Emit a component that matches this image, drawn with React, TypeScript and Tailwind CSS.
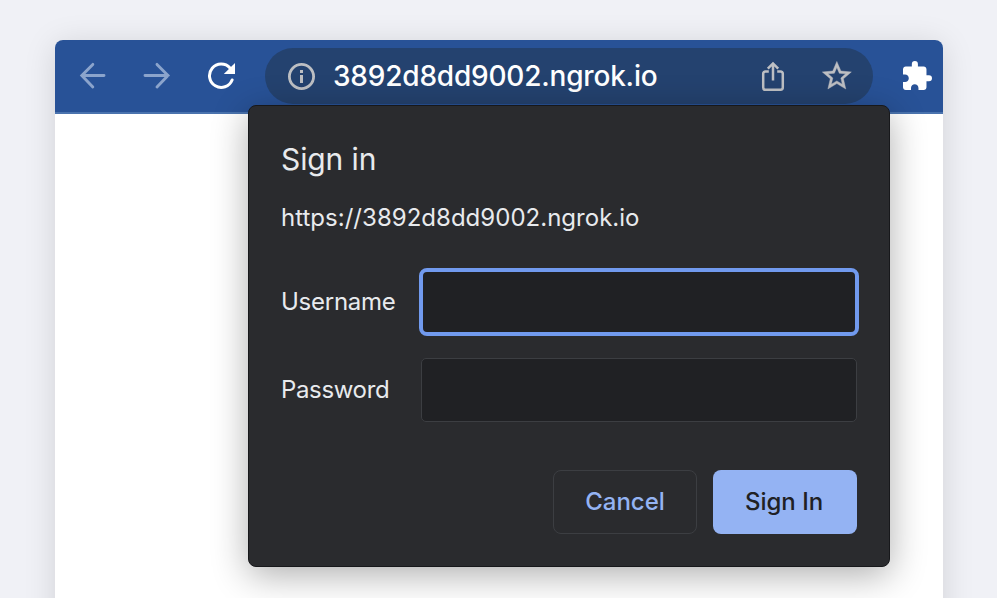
import React from "react";

function BackIcon() {
  return (
    <svg width="28" height="28" viewBox="0 0 28 28" fill="none" stroke="#8ba4cc" strokeWidth="2.9" strokeLinecap="round" strokeLinejoin="miter">
      <path d="M25 13.5H3M13.8 2.4 2.8 13.5 13.8 25" />
    </svg>
  );
}

function ForwardIcon() {
  return (
    <svg width="28" height="28" viewBox="0 0 28 28" fill="none" stroke="#8ba4cc" strokeWidth="2.9" strokeLinecap="round" strokeLinejoin="miter">
      <path d="M2 13.5H25M14 2.4 25 13.5 14 25" />
    </svg>
  );
}

function ReloadIcon() {
  return (
    <svg width="28" height="28" viewBox="0 0 28 28" fill="none">
      <path d="M25.1 18A11.7 11.7 0 1 1 23 6" stroke="#fff" strokeWidth="3" strokeLinecap="round" />
      <path d="M28 1v11H16.8z" fill="#fff" />
    </svg>
  );
}

function InfoIcon() {
  return (
    <svg width="28" height="28" viewBox="0 0 28 28" fill="none">
      <circle cx="13.5" cy="14.5" r="12.1" stroke="#bdbfc3" strokeWidth="2.8" />
      <path d="M12 8h3v3h-3zM12 13h3v8h-3z" fill="#bdbfc3" />
    </svg>
  );
}

function ShareIcon() {
  return (
    <svg width="24" height="32" viewBox="0 0 24 32" fill="none" stroke="#bdbfc3" strokeWidth="2.5">
      <path d="M7.8 11.6H4.4a2.2 2.2 0 0 0-2.2 2.2v13.8a2.2 2.2 0 0 0 2.2 2.2h15.2a2.2 2.2 0 0 0 2.2-2.2V13.8a2.2 2.2 0 0 0-2.2-2.2h-3.4" />
      <path d="M12 20.5V4M6.8 8.6 12 3.4l5.2 5.2" />
    </svg>
  );
}

function StarIcon() {
  return (
    <svg width="34.8" height="34.8" viewBox="-0.3 0.3 24 24" fill="#bdbfc3" stroke="#bdbfc3" strokeWidth="0.3">
      <path d="M22 9.24l-7.19-.62L12 2 9.19 8.63 2 9.24l5.46 4.73L5.82 21 12 17.27 18.18 21l-1.63-7.03L22 9.24zM12 15.4l-3.76 2.27 1-4.28-3.32-2.88 4.38-.38L12 6.1l1.71 4.04 4.38.38-3.32 2.88 1 4.28L12 15.4z" />
    </svg>
  );
}

function ExtensionIcon() {
  return (
    <svg width="29" height="29" viewBox="2 1 21 21" fill="#fff">
      <path d="M20.8 11.3H19V7c0-1.1-.9-2-2-2h-4.2V3.2a2.2 2.2 0 0 0-4.4 0V5H4c-1.1 0-1.99.9-1.99 2v3.8H3.5c1.49 0 2.7 1.21 2.7 2.7s-1.21 2.7-2.7 2.7H2V20c0 1.1.9 2 2 2h3.8v-1.5c0-1.49 1.21-2.7 2.7-2.7 1.49 0 2.7 1.21 2.7 2.7V22H17c1.1 0 2-.9 2-2v-4.3h1.8a2.2 2.2 0 0 0 0-4.4z" />
    </svg>
  );
}

function Toolbar() {
  return (
    <header className="flex h-[74px] items-start overflow-hidden rounded-t-lg border-b-2 border-[#4a73ae] bg-[#285297] pt-2">
      <div className="flex h-14 w-[210px] items-center gap-9 pl-6">
        <BackIcon />
        <ForwardIcon />
        <ReloadIcon />
      </div>
      <div className="flex h-14 w-[608px] items-center rounded-full bg-[#24426f] pl-[23px] pr-[19px]">
        <InfoIcon />
        <span className="ml-[17px] flex-1 whitespace-nowrap text-[28px] font-[450] leading-none tracking-[-0.2px] text-white">
          3892d8dd9002.ngrok.io
        </span>
        <ShareIcon />
        <span className="ml-[34px] flex">
          <StarIcon />
        </span>
      </div>
      <div className="ml-[30px] flex h-[54px] items-center">
        <ExtensionIcon />
      </div>
    </header>
  );
}

function SignInDialog() {
  return (
    <form
      onSubmit={(e) => e.preventDefault()}
      className="absolute left-[248px] top-[105px] h-[462px] w-[642px] rounded-lg border border-[#17181b] bg-[#2a2b2e] px-8 text-[#e8eaed] shadow-[0_8px_36px_rgba(0,0,0,0.32)]"
    >
      <h1 className="mt-[35px] h-9 text-[30px] leading-9">
        <span className="tracking-[-0.1px]">Sign in</span>
      </h1>
      <p className="mt-[26px] h-[30px] whitespace-nowrap text-[24px] leading-[30px]">
        <span className="tracking-[0.02px]">https://3892d8dd9002.ngrok.io</span>
      </p>
      <div className="mt-[35px] flex h-[68px] items-center">
        <label htmlFor="user" className="w-[138px] text-[24px] tracking-[-0.25px]">Username</label>
        <input id="user" className="-mr-0.5 h-[68px] w-[440px] rounded-lg border-4 border-[#719aee] bg-[#202124] outline-none" />
      </div>
      <div className="mt-[22px] flex h-16 items-center">
        <label htmlFor="pass" className="w-[140px] text-[24px] tracking-[-0.35px]">Password</label>
        <input id="pass" type="password" className="h-16 w-[436px] rounded-[5px] border border-[#3c3e42] bg-[#202124] outline-none" />
      </div>
      <div className="mt-12 flex justify-end gap-4 text-[24px] font-medium">
        <button type="button" className="h-16 w-36 rounded-lg border border-[#3c3e42] text-[#94b3f3]">Cancel</button>
        <button type="submit" className="h-16 w-36 rounded-lg bg-[#94b3f3] pr-0.5 text-[#202124]">Sign In</button>
      </div>
    </form>
  );
}

export default function App() {
  return (
    <div className="relative h-[598px] w-[997px] overflow-hidden bg-[#f0f1f6] px-[55px] pt-10 font-['Inter',sans-serif]">
      <main className="h-[640px] w-[888px] rounded-t-lg bg-white shadow-[0_4px_32px_rgba(0,0,0,0.13)]">
        <Toolbar />
      </main>
      <SignInDialog />
    </div>
  );
}
